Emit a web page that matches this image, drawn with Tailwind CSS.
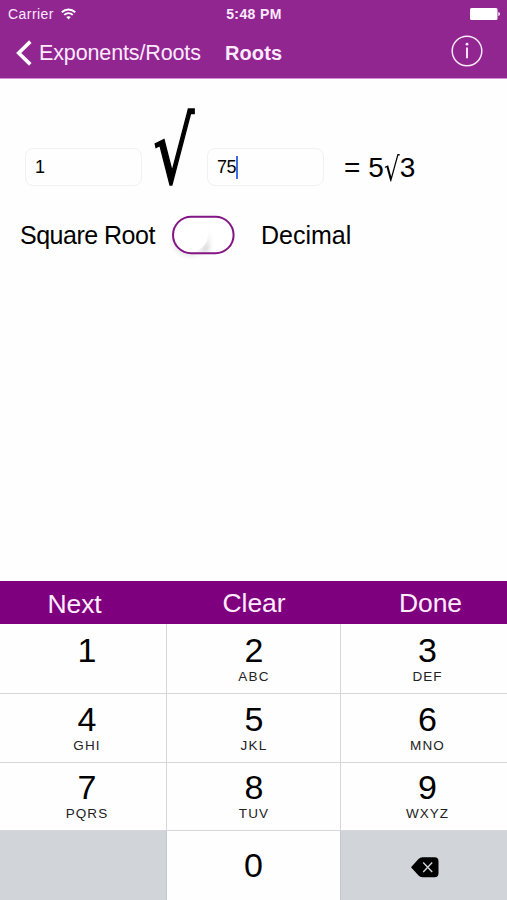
<!DOCTYPE html>
<html lang="en">
<head>
<meta charset="utf-8">
<title>Roots</title>
<script src="https://cdn.jsdelivr.net/npm/@tailwindcss/browser@4"></script>
</head>
<body class="bg-white">
<div class="flex h-[900px] w-[507px] flex-col overflow-hidden bg-[#fefefe] font-['Liberation_Sans',Arial,sans-serif] text-black">
  <header class="h-[79px] shrink-0 border-b border-[#d88bd6] bg-[#922691] text-[#fdeaff]">
    <div class="grid h-7 grid-cols-3 items-center pl-2 pr-[7px] text-[14px]">
      <div class="flex items-center gap-[7px]">
        <span class="tracking-[0.45px]">Carrier</span>
        <svg class="h-[12px] w-[15px]" viewBox="0 0 15 12" fill="none" stroke="#fff" stroke-width="1.9"><path d="M.8 4.3C4.6.6 10.4.6 14.2 4.3M3.2 6.9C5.7 4.6 9.3 4.6 11.8 6.9"/><path d="M5.2 9.1C6.5 7.9 8.5 7.9 9.8 9.1L7.5 11.4Z" fill="#fff" stroke="none"/></svg>
      </div>
      <span class="text-center text-[14px] font-bold tracking-[0.4px]">5:48 PM</span>
      <svg class="h-[12px] w-[30px] justify-self-end" viewBox="0 0 30 12" fill="#fff"><rect width="27.5" height="12" rx="1.5"/><path d="M28.3 4Q30 4.5 30 6T28.3 8Z"/></svg>
    </div>
    <div class="flex h-[50px] items-center pl-4 pr-6">
      <svg class="h-[26px] w-4" viewBox="0 0 16 26" fill="none" stroke="#fff" stroke-width="3.6"><path d="M14.3 1.6 2.7 13 14.3 24.4"/></svg>
      <span class="ml-[7px] w-[186px] whitespace-nowrap text-[21.5px] tracking-[-0.13px]">Exponents/Roots</span>
      <span class="text-[20px] font-bold tracking-[0.1px]">Roots</span>
      <svg class="mb-1 ml-auto h-8 w-8" viewBox="0 0 32 32" fill="none" stroke="#fdeaff"><circle cx="16" cy="16" r="14.8" stroke-width="1.5"/><path d="M16 12.5V23.3" stroke-width="1.9"/><circle cx="16" cy="9.2" r="1.4" fill="#fdeaff" stroke="none"/></svg>
    </div>
  </header>

  <main class="h-[502px] shrink-0">
    <div class="flex h-[128px] items-start pl-[25px]">
      <div class="mt-[69px] flex h-[38px] w-[117px] items-center rounded-lg border border-[#f1f1f1] pl-[9px] text-[18px]">1</div>
      <svg class="ml-3 mt-[29px] h-[78px] w-[42px] overflow-visible" viewBox="0 0 42 78"><text class="font-['DejaVu_Sans']" x="0" y="70" font-size="84" textLength="41" lengthAdjust="spacingAndGlyphs" transform="translate(-.8 -1) scale(1 1.085)" stroke="#000" stroke-width="1.6">√</text></svg>
      <div class="ml-[11px] mt-[69px] flex h-[38px] w-[117px] items-center rounded-lg border border-[#f1f1f1] pl-[9px] text-[18px] tracking-[-0.5px]">75<span class="h-[23px] w-[2px] shrink-0 bg-[#3f6de0]"></span></div>
      <div class="ml-5 mt-[73px] whitespace-nowrap text-[28px] leading-8">= 5<span class="inline-block w-4 origin-top-left scale-x-[0.88] scale-y-[1.18] font-['DejaVu_Sans'] leading-8">√</span>3</div>
    </div>
    <div class="flex h-[57px] items-center pl-[20px] text-[25px]">
      <span class="w-[152px] whitespace-nowrap tracking-[-0.5px]">Square Root</span>
      <svg class="h-12 w-[63px] overflow-visible" viewBox="0 0 63 48">
        <defs><filter id="s" x="-50%" y="-50%" width="200%" height="200%"><feGaussianBlur stdDeviation="2.5"/></filter></defs>
        <ellipse cx="18" cy="29" rx="17" ry="15" fill="#000" opacity=".1" filter="url(#s)"/>
        <rect x="1" y="4.8" width="60.6" height="36.4" rx="18.2" fill="#fff"/>
        <path d="M37 14V40H20Q37 40 37 14Z" fill="#000" opacity=".17" filter="url(#s)"/>
        <circle cx="19" cy="22.5" r="17" fill="#fff"/>
        <rect x="1" y="4.8" width="60.6" height="36.4" rx="18.2" fill="none" stroke="#841584" stroke-width="2"/>
      </svg>
      <span class="ml-[26px]">Decimal</span>
    </div>
  </main>

  <section class="flex min-h-0 flex-1 flex-col">
    <div class="grid h-[43px] shrink-0 grid-cols-[149px_210px_143px] bg-[#7f007e] text-center text-[26.5px] leading-[44px] tracking-[-0.1px] text-[#ffecff]">
      <span class="pt-px">Next</span><span>Clear</span><span>Done</span>
    </div>
    <div class="grid flex-1 grid-cols-[167px_174px_166px] grid-rows-[70px_69px_68px_69px] text-center text-[34px] leading-[38px]">
      <div class="border-b border-r border-[#d6d6d8] pl-2 pt-[7px]">1</div>
      <div class="border-b border-r border-[#d6d6d8] pl-px pt-[7px]">2<p class="text-[13.5px] leading-[15px] tracking-[1.2px] text-[#222]">ABC</p></div>
      <div class="border-b border-[#d6d6d8] pl-[7px] pt-[7px]">3<p class="text-[13.5px] leading-[15px] tracking-[1px] text-[#222]">DEF</p></div>
      <div class="border-b border-r border-[#d6d6d8] pl-[8px] pt-[6px]">4<p class="text-[13.5px] leading-[15px] tracking-[1.2px] text-[#222]">GHI</p></div>
      <div class="border-b border-r border-[#d6d6d8] pl-px pt-[6px]">5<p class="text-[13.5px] leading-[15px] tracking-[1.2px] text-[#222]">JKL</p></div>
      <div class="border-b border-[#d6d6d8] pl-[7px] pt-[6px]">6<p class="text-[13.5px] leading-[15px] tracking-[1.2px] text-[#222]">MNO</p></div>
      <div class="border-b border-r border-[#d6d6d8] pl-[8px] pt-[5px]">7<p class="text-[13.5px] leading-[15px] tracking-[1.1px] text-[#222]">PQRS</p></div>
      <div class="border-b border-r border-[#d6d6d8] pl-px pt-[5px]">8<p class="text-[13.5px] leading-[15px] tracking-[1.2px] text-[#222]">TUV</p></div>
      <div class="border-b border-[#d6d6d8] pl-[7px] pt-[5px]">9<p class="text-[13.5px] leading-[15px] tracking-[1px] text-[#222]">WXYZ</p></div>
      <div class="border-r border-[#c3c7cb] bg-[#d1d5da]"></div>
      <div class="border-r border-[#c3c7cb] pt-[15px]">0</div>
      <div class="flex items-center justify-center bg-[#d1d5da] pl-[2px] pt-[4px]">
        <svg class="h-[21px] w-7" viewBox="0 0 28 21"><path d="M0 10.3 7.5 2Q9 .3 11.5.3H23.5Q27.5.3 27.5 4.3V16.2Q27.5 20.2 23.5 20.2H11.5Q9 20.2 7.5 18.5Z"/><path d="m12.2 5.6 9 9.4m0-9.4-9 9.4" fill="none" stroke="#d1d5da" stroke-width="1.4"/></svg>
      </div>
    </div>
  </section>
</div>
</body>
</html>
